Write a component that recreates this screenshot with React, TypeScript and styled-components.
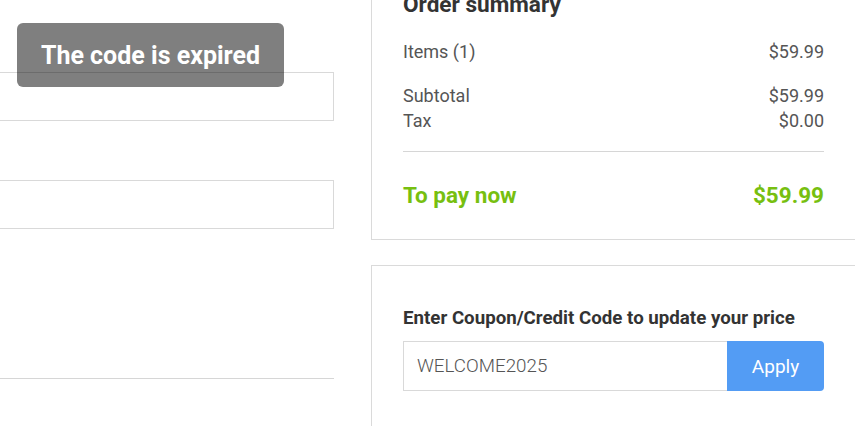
import React from "react";
import styled, { createGlobalStyle } from "styled-components";

const GlobalStyle = createGlobalStyle`
  html, body {
    margin: 0;
    padding: 0;
    background: #ffffff;
    overflow: hidden;
  }
  body {
    font-family: Roboto, "Liberation Sans", Arial, sans-serif;
    color: #555555;
  }
  * { box-sizing: border-box; }
`;

const Page = styled.div`
  position: relative;
  display: flex;
  align-items: flex-start;
  margin-top: -40px;
  width: 855px;
  height: 466px;
  overflow: hidden;
`;

const LeftColumn = styled.div`
  display: flex;
  flex-direction: column;
  flex: 0 0 354px;
  margin-left: -20px;
  padding-top: 112px;
`;

const FieldBox = styled.div<{ $gap?: number }>`
  height: 49px;
  border: 1px solid #d9d9d9;
  background: #ffffff;
  margin-top: ${(p) => p.$gap ?? 0}px;
`;

const Rule = styled.hr`
  margin: 149px 0 0 0;
  border: 0;
  border-top: 1px solid #d6d6d6;
  height: 0;
`;

const RightColumn = styled.div`
  display: flex;
  flex-direction: column;
  flex: 0 0 485px;
  margin-left: 37px;
  gap: 25px;
`;

const Card = styled.section<{ $top: number; $bottom: number }>`
  width: 485px;
  border: 1px solid #dadada;
  padding: ${(p) => p.$top}px 31px ${(p) => p.$bottom}px 31px;
  background: #ffffff;
`;

const CardTitle = styled.h2`
  margin: 0 0 21px 0;
  font-size: 22.6px;
  line-height: 27px;
  font-weight: 700;
  color: #333333;
`;

const Row = styled.div<{ $gap?: number }>`
  display: flex;
  justify-content: space-between;
  font-size: 18px;
  line-height: 25px;
  color: #555555;
  margin-top: ${(p) => p.$gap ?? 0}px;
`;

const Divider = styled.div`
  height: 1px;
  background: #d6d6d6;
  margin-top: 18px;
`;

const TotalRow = styled.div`
  display: flex;
  justify-content: space-between;
  margin-top: 28px;
  font-size: 22.5px;
  line-height: 30px;
  font-weight: 700;
  color: #77bf10;
`;

const CouponLabel = styled.div`
  font-size: 18.7px;
  line-height: 24px;
  font-weight: 700;
  color: #333333;
  margin-bottom: 11px;
`;

const CouponForm = styled.div`
  display: flex;
  height: 50px;
`;

const CouponInput = styled.input`
  flex: 1;
  min-width: 0;
  height: 50px;
  border: 1px solid #d9d9d9;
  border-right: 0;
  padding: 0 13px;
  font-family: Roboto, "Liberation Sans", Arial, sans-serif;
  font-size: 18.8px;
  font-weight: 300;
  color: #555555;
  outline: none;
  background: #ffffff;
`;

const ApplyButton = styled.button`
  flex: 0 0 97px;
  height: 50px;
  border: 0;
  border-radius: 0 4px 4px 0;
  background: #539cf4;
  color: #ffffff;
  font-family: Roboto, "Liberation Sans", Arial, sans-serif;
  font-size: 19px;
  cursor: pointer;
`;

const Toast = styled.div`
  position: absolute;
  top: 63px;
  left: 17px;
  width: 267px;
  height: 64px;
  display: flex;
  align-items: center;
  justify-content: center;
  border-radius: 6px;
  background: rgba(0, 0, 0, 0.5);
  color: #ffffff;
  font-size: 25px;
  font-weight: 700;
`;

export default function App() {
  return (
    <>
      <GlobalStyle />
      <Page>
        <LeftColumn>
          <FieldBox />
          <FieldBox $gap={59} />
          <Rule />
        </LeftColumn>
        <RightColumn>
          <Card $top={30} $bottom={29}>
            <CardTitle>Order summary</CardTitle>
            <Row>
              <span>Items (1)</span>
              <span>$59.99</span>
            </Row>
            <Row $gap={19}>
              <span>Subtotal</span>
              <span>$59.99</span>
            </Row>
            <Row>
              <span>Tax</span>
              <span>$0.00</span>
            </Row>
            <Divider />
            <TotalRow>
              <span>To pay now</span>
              <span>$59.99</span>
            </TotalRow>
          </Card>
          <Card $top={40} $bottom={40}>
            <CouponLabel>Enter Coupon/Credit Code to update your price</CouponLabel>
            <CouponForm>
              <CouponInput defaultValue="WELCOME2025" />
              <ApplyButton>Apply</ApplyButton>
            </CouponForm>
          </Card>
        </RightColumn>
        <Toast>The code is expired</Toast>
      </Page>
    </>
  );
}
